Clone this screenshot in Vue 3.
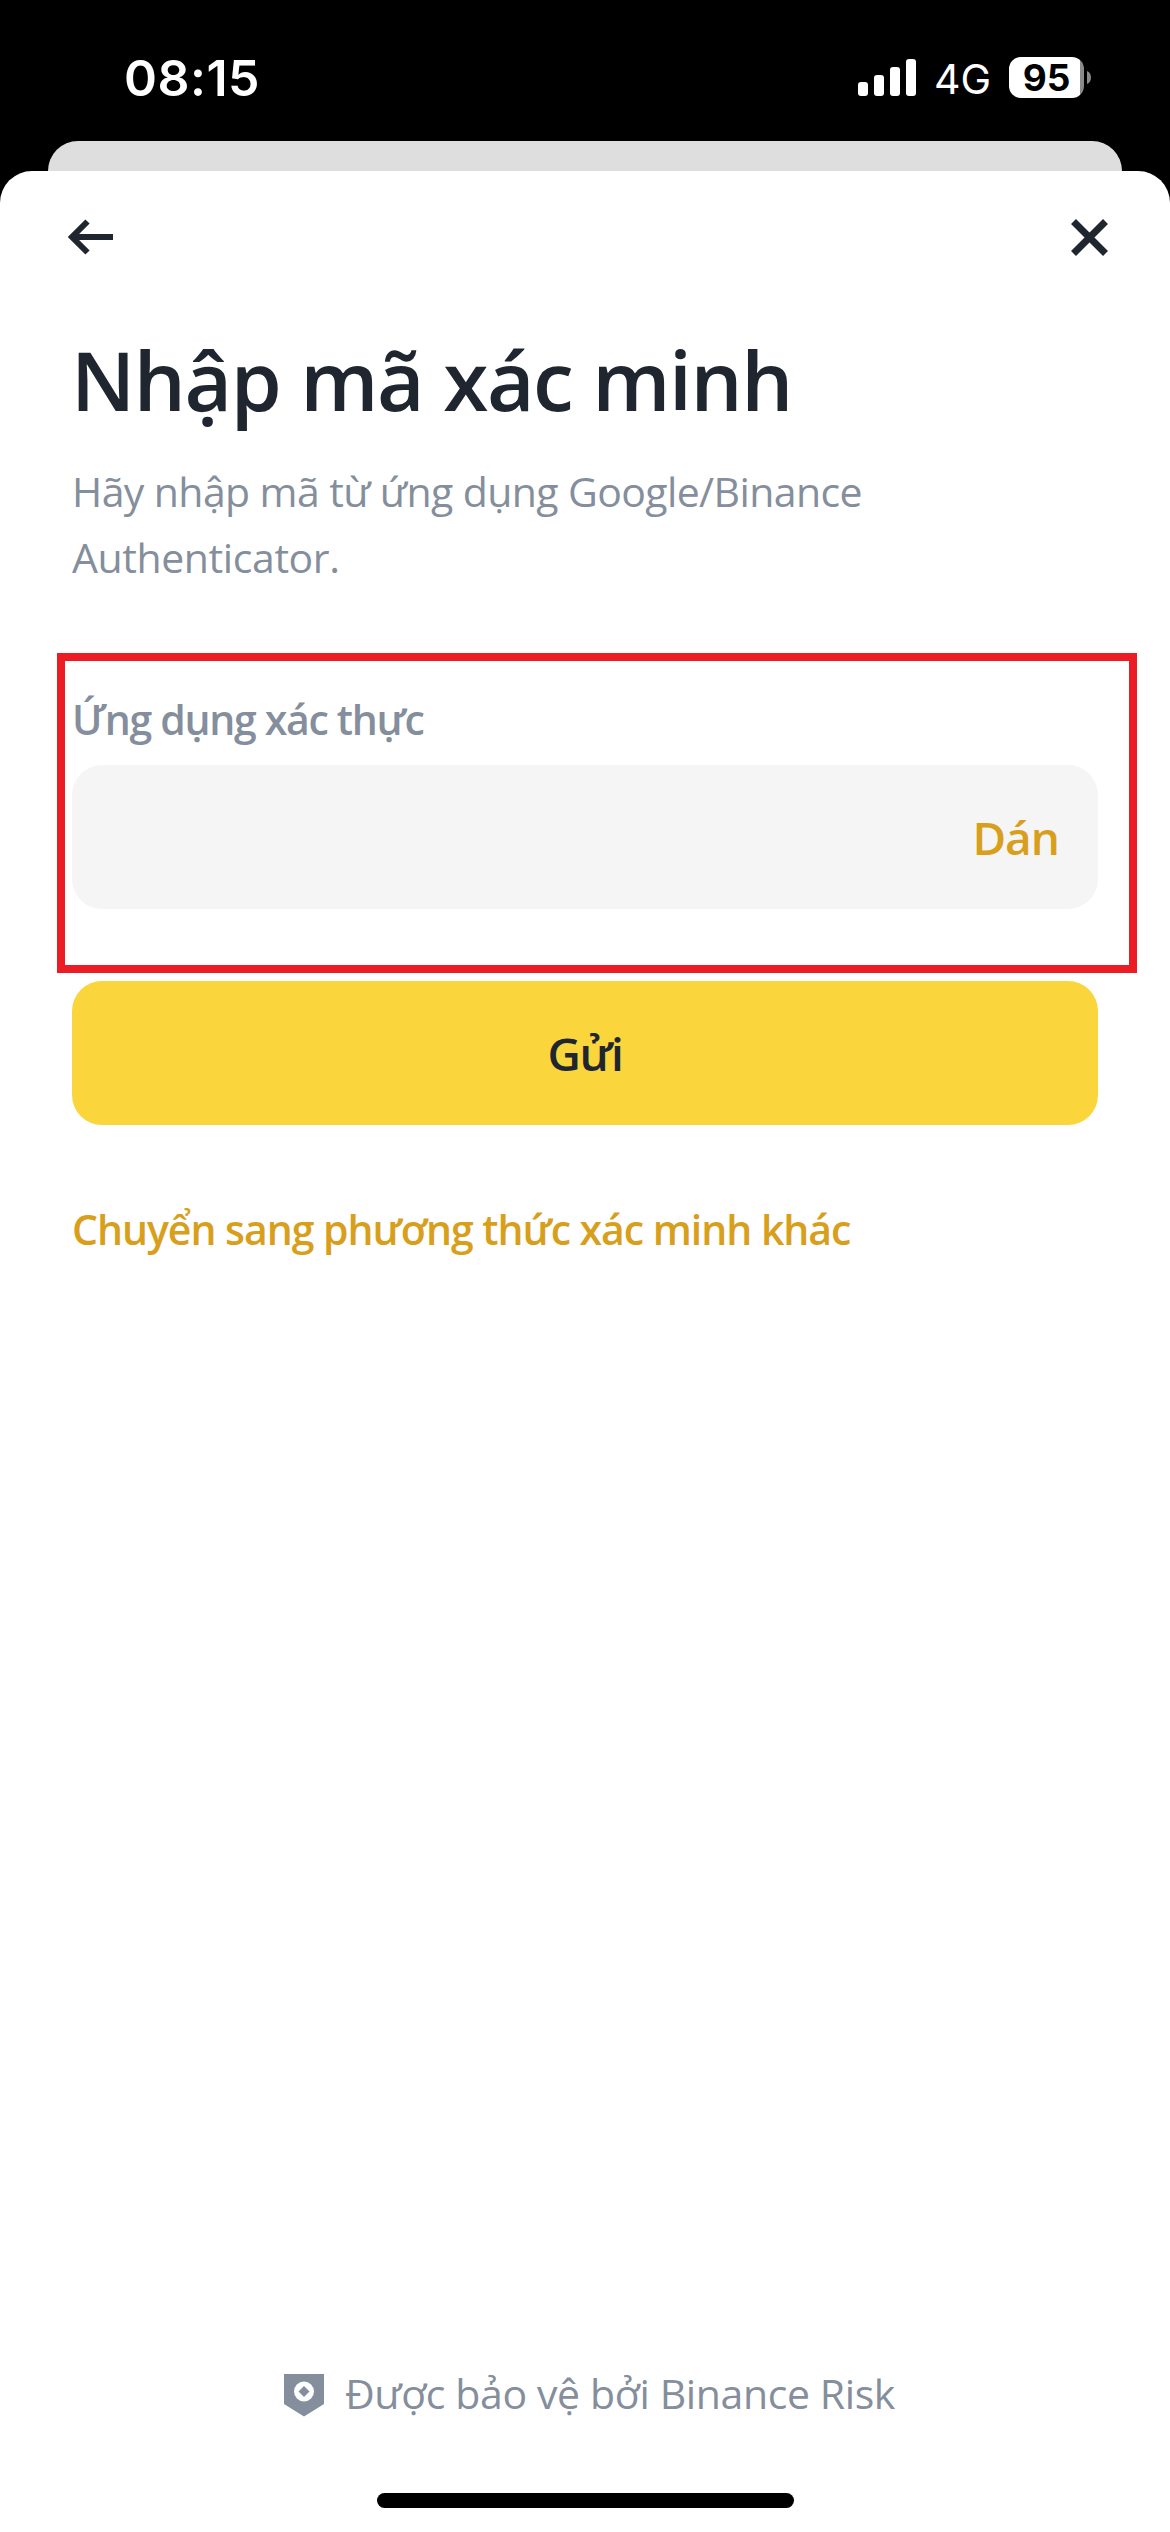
<script setup>
import { ref } from 'vue'

const bars = [14, 21, 29, 37]
const code = ref('')
</script>

<template>
  <div class="screen">
    <header class="status">
      <span class="time">08:15</span>
      <div class="indicators">
        <div class="signal">
          <i v-for="h in bars" :key="h" :style="{ height: h + 'px' }"></i>
        </div>
        <span class="network">4G</span>
        <div class="battery">
          <div class="battery-body"><span>95</span></div>
          <svg class="battery-tip" width="4" height="13" viewBox="0 0 4 13"><path d="M0 0C5.300 2 5.300 11 0 13Z" fill="#8a8a8a" /></svg>
        </div>
      </div>
    </header>

    <div class="back-card"></div>

    <main class="sheet">
      <nav class="nav">
        <button class="icon" aria-label="Quay lại">
          <svg width="46" height="36" viewBox="0 0 46 36" fill="none" stroke="#202630" stroke-width="6">
            <path d="M5 18H46M20.500 2.500L5 18L20.500 33.500" />
          </svg>
        </button>
        <button class="icon" aria-label="Đóng">
          <svg width="37" height="37" viewBox="0 0 37 37" fill="none" stroke="#202630" stroke-width="7">
            <path d="M2.500 2.500L34.500 34.500M34.500 2.500L2.500 34.500" />
          </svg>
        </button>
      </nav>

      <h1>Nhập mã xác minh</h1>
      <p class="hint">Hãy nhập mã từ ứng dụng Google/Binance<br /><span class="hint-end">Authenticator.</span></p>

      <section class="highlight">
        <label for="code">Ứng dụng xác thực</label>
        <div class="field">
          <input id="code" v-model="code" />
          <button class="paste">Dán</button>
        </div>
      </section>

      <button class="submit">Gửi</button>
      <a class="switch">Chuyển sang phương thức xác minh khác</a>

      <footer class="footer">
        <svg width="40" height="43" viewBox="0 0 40 43">
          <path d="M0 0H40V30L20 42.500L0 30Z" fill="#848e9c" />
          <circle cx="20" cy="17.500" r="10" fill="#fff" />
          <path d="M20 12L25.500 17.500L20 23L14.500 17.500Z" fill="#848e9c" />
        </svg>
        <span>Được bảo vệ bởi Binance Risk</span>
      </footer>
      <div class="home"></div>
    </main>
  </div>
</template>

<style>
body { margin: 0; background: #000; }
</style>

<style scoped>
.screen {
  box-sizing: border-box;
  width: 1170px;
  height: 2532px;
  display: flex;
  flex-direction: column;
  overflow: hidden;
  background: #000;
  font-family: "Open Sans", "Noto Sans", sans-serif;
}
button {
  border: 0;
  padding: 0;
  background: none;
  font: inherit;
}
.status {
  box-sizing: border-box;
  height: 141px;
  padding: 47px 79px 0 124px;
  display: flex;
  justify-content: space-between;
  align-items: flex-start;
  color: #fff;
  font-family: Inter, sans-serif;
}
.time {
  font-size: 50px;
  line-height: 62px;
  font-weight: 600;
  letter-spacing: 0.5px;
}
.indicators { display: flex; align-items: flex-start; }
.signal {
  display: flex;
  align-items: flex-end;
  gap: 6px;
  height: 37px;
  margin: 12px 18px 0 0;
}
.signal i {
  width: 10px;
  border-radius: 3px;
  background: #fff;
}
.network {
  width: 57px;
  margin: 7px 18px 0 0;
  font-size: 41px;
  line-height: 50px;
}
.battery {
  display: flex;
  align-items: center;
  gap: 3px;
  margin-top: 10px;
}
.battery-body {
  width: 75px;
  height: 41px;
  border-radius: 12px;
  background: linear-gradient(90deg, #fff 71px, #8a8a8a 71px);
  color: #000;
  font-size: 37px;
  line-height: 41px;
  font-weight: 700;
  display: flex;
  justify-content: center;
}
.back-card {
  flex: none;
  height: 60px;
  margin: 0 48px -30px;
  border-radius: 30px 30px 0 0;
  background: #dedede;
}
.sheet {
  box-sizing: border-box;
  position: relative;
  flex: 1;
  display: flex;
  flex-direction: column;
  border-radius: 32px 32px 0 0;
  background: #fff;
}
.nav {
  height: 132px;
  padding: 0 62px 0 67px;
  display: flex;
  justify-content: space-between;
  align-items: center;
}
.icon { display: flex; }
h1 {
  margin: 26px 71px 0;
  color: #202630;
  font-size: 82px;
  line-height: 100px;
  font-weight: 600;
  letter-spacing: -1.4px;
  white-space: nowrap;
}
.hint {
  margin: 29px 72px 63px;
  color: #848e9c;
  font-size: 41px;
  line-height: 66px;
  letter-spacing: -0.6px;
  white-space: nowrap;
}
.hint-end { letter-spacing: -0.4px; }
.highlight {
  box-sizing: border-box;
  height: 320px;
  margin: 0 33px 8px 57px;
  padding: 28px 31px 0 7px;
  border: 8px solid #ec1c24;
}
label {
  display: block;
  margin-bottom: 16px;
  color: #848e9c;
  font-size: 41px;
  line-height: 60px;
  font-weight: 600;
  letter-spacing: -1.3px;
}
.field {
  box-sizing: border-box;
  height: 144px;
  padding: 0 39px 0 30px;
  display: flex;
  align-items: center;
  border-radius: 30px;
  background: #f5f5f5;
}
.field input {
  flex: 1;
  min-width: 0;
  border: 0;
  outline: 0;
  background: transparent;
  font: 46px "Open Sans", sans-serif;
}
.paste {
  color: #d89f1c;
  font-size: 46px;
  line-height: 60px;
  font-weight: 600;
  letter-spacing: -1px;
}
.submit {
  flex: none;
  height: 144px;
  margin: 0 72px;
  border-radius: 30px;
  background: #fad53c;
  color: #202630;
  font-size: 46px;
  font-weight: 600;
  letter-spacing: -1.3px;
}
.switch {
  margin: 74px 72px 0;
  color: #d89f1c;
  font-size: 41px;
  line-height: 60px;
  font-weight: 600;
  letter-spacing: -1.04px;
  white-space: nowrap;
}
.footer {
  display: flex;
  align-items: center;
  gap: 21px;
  margin: auto 0 70px 284px;
  color: #848e9c;
  font-size: 41px;
  line-height: 60px;
  letter-spacing: -0.38px;
  white-space: nowrap;
}
.footer svg { margin-top: 4px; }
.home {
  width: 417px;
  height: 15px;
  margin: 0 auto 24px;
  border-radius: 8px;
  background: #000;
}
</style>
